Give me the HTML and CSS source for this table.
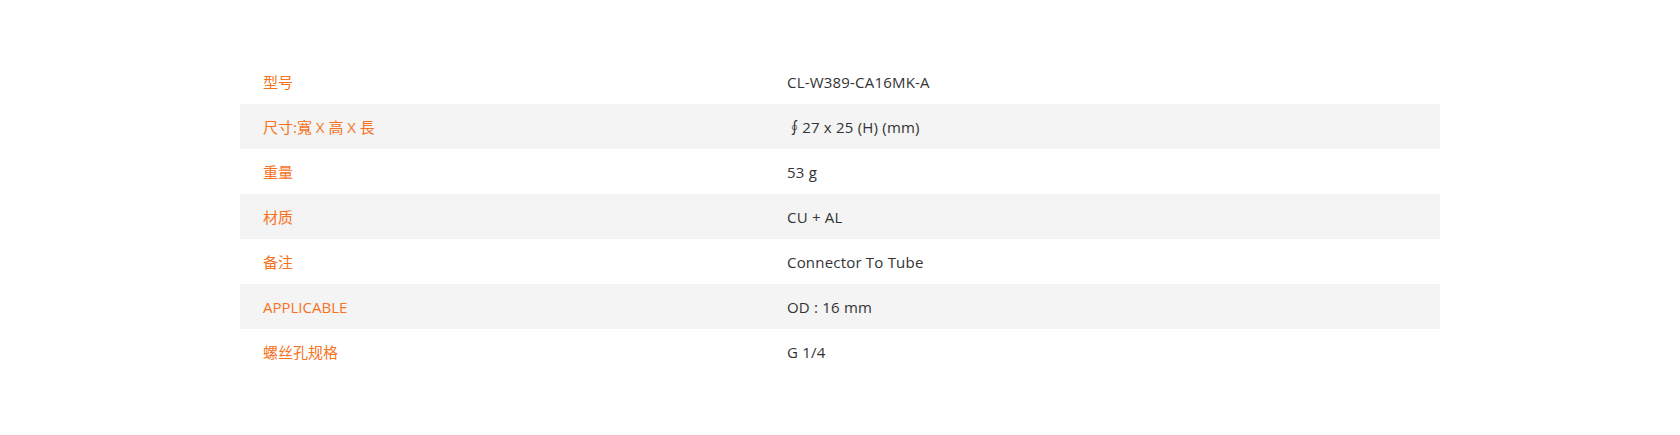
FILE: index.html
```html
<!DOCTYPE html>
<html lang="zh">
<head>
<meta charset="utf-8">
<title>规格</title>
<link rel="stylesheet" href="styles.css">
</head>
<body>
<div class="page">
  <div class="spec">
    <div class="row"><div class="label">型号</div><div class="value">CL-W389-CA16MK-A</div></div>
    <div class="row alt"><div class="label">尺寸:寬 X 高 X 長</div><div class="value">∮27 x 25 (H) (mm)</div></div>
    <div class="row"><div class="label">重量</div><div class="value">53 g</div></div>
    <div class="row alt"><div class="label">材质</div><div class="value">CU + AL</div></div>
    <div class="row"><div class="label">备注</div><div class="value">Connector To Tube</div></div>
    <div class="row alt"><div class="label">APPLICABLE</div><div class="value">OD : 16 mm</div></div>
    <div class="row"><div class="label">螺丝孔规格</div><div class="value">G 1/4</div></div>
  </div>
</div>
</body>
</html>
```
FILE: styles.css
```css
html, body {
  margin: 0;
  padding: 0;
  background: #ffffff;
}
body {
  font-family: "Open Sans", "Noto Sans CJK SC", sans-serif;
  font-size: 15px;
  color: #333333;
}
.page {
  padding: 59px 240px 0;
}
.spec {
  width: 1200px;
}
.row {
  display: grid;
  grid-template-columns: 524px 1fr;
  height: 45px;
  align-items: center;
}
.row.alt {
  background: #f4f4f4;
}
.label {
  padding-left: 23px;
  color: #f7721d;
}
.value {
  padding-left: 23px;
  color: #333333;
  letter-spacing: 0.2px;
}
```
